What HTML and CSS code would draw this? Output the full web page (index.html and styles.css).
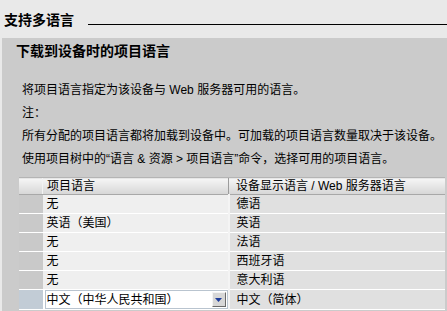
FILE: index.html
```html
<!DOCTYPE html>
<html lang="zh-CN">
<head>
    <meta charset="UTF-8">
    <title>支持多语言</title>
    <link rel="stylesheet" href="styles.css">
</head>
<body>

    <div class="section-title">
        <span>支持多语言</span>
        <div class="title-line"></div>
    </div>

    <div class="panel">
        <h2>下载到设备时的项目语言</h2>
        <p>将项目语言指定为该设备与 Web 服务器可用的语言。</p>
        <p>注：</p>
        <p>所有分配的项目语言都将加载到设备中。可加载的项目语言数量取决于该设备。</p>
        <p>使用项目树中的“语言 &amp; 资源 &gt; 项目语言”命令，选择可用的项目语言。</p>

        <table class="lang-table">
            <thead>
                <tr>
                    <th class="row-head"></th>
                    <th class="col-project">项目语言</th>
                    <th class="col-device">设备显示语言 / Web 服务器语言</th>
                </tr>
            </thead>
            <tbody>
                <tr>
                    <td class="row-head"></td>
                    <td class="col-project">无</td>
                    <td class="col-device">德语</td>
                </tr>
                <tr>
                    <td class="row-head"></td>
                    <td class="col-project">英语（美国）</td>
                    <td class="col-device">英语</td>
                </tr>
                <tr>
                    <td class="row-head"></td>
                    <td class="col-project">无</td>
                    <td class="col-device">法语</td>
                </tr>
                <tr>
                    <td class="row-head"></td>
                    <td class="col-project">无</td>
                    <td class="col-device">西班牙语</td>
                </tr>
                <tr>
                    <td class="row-head"></td>
                    <td class="col-project">无</td>
                    <td class="col-device">意大利语</td>
                </tr>
                <tr class="selected">
                    <td class="row-head"></td>
                    <td class="col-project">
                        <div class="combo">
                            <span class="combo-text">中文（中华人民共和国）</span>
                            <span class="combo-button">
                                <svg width="7" height="4" viewBox="0 0 7 4"><path d="M0 0h7L3.5 4z" fill="#1d3c9a"/></svg>
                            </span>
                        </div>
                    </td>
                    <td class="col-device">中文（简体）</td>
                </tr>
            </tbody>
        </table>
    </div>

</body>
</html>
```

FILE: styles.css
```css
/* 基本样式 */
body {
    margin: 0;
    background-color: #e9e9e9;
    color: #000;
    font-family: "Liberation Sans", "Noto Sans CJK SC", sans-serif;
    font-size: 12px;
}

.section-title {
    display: flex;
    align-items: flex-end;
    height: 29px;
    padding-left: 4px;
    margin-bottom: 9px;
    font-size: 14px;
    font-weight: bold;
    line-height: 18px;
}

.title-line {
    flex: 1;
    margin-left: 14px;
    border-bottom: 1px solid #000;
    margin-bottom: 4px;
}

.panel {
    margin-left: 2px;
    padding: 3px 2px 4px 17px;
    background-color: #cbcbcb;
}

.panel h2 {
    margin: 0 0 18px -3px;
    font-size: 14px;
    line-height: 20px;
}

.panel p {
    margin: 0 0 0 3px;
    line-height: 23px;
}

/* 表格 */
.lang-table {
    width: 426px;
    margin-top: 6px;
    border-collapse: collapse;
    table-layout: fixed;
}

.lang-table th,
.lang-table td {
    padding: 0;
    text-align: left;
    font-weight: normal;
    white-space: nowrap;
    overflow: hidden;
}

.lang-table th {
    height: 16px;
    line-height: 16px;
    background: linear-gradient(#f6f6f6, #e6e6e6 50%, #d6d6d6);
    border-top: 1px solid #b4b4b4;
    border-bottom: 1px solid #a8a8a8;
}

.lang-table td {
    height: 18px;
    line-height: 18px;
    border-bottom: 1px solid #fff;
}

.row-head {
    width: 23px;
}

.lang-table td.row-head {
    background-color: #c9c9c9;
}

.col-project {
    width: 181px;
    padding-left: 4px !important;
}

.lang-table td.col-project {
    background-color: #efefef;
}

.col-device {
    padding-left: 7px !important;
    border-left: 1px solid #9c9c9c;
}

.lang-table td.col-device {
    background-color: #e0e0e0;
    border-left: 2px solid #f4f4f4;
}

.lang-table th.col-project {
    border-left: 1px solid #f2f2f2;
}

.selected td.row-head {
    background-color: #c2ccd6;
}

.lang-table .selected td.col-project {
    padding: 0 !important;
    background-color: #fff;
}

.combo {
    display: flex;
    align-items: center;
    height: 17px;
    margin-left: 2px;
    border: 1px solid #b9c4cf;
    background-color: #fff;
}

.combo-text {
    flex: 1;
    padding-left: 1px;
}

.combo-button {
    display: flex;
    align-items: center;
    justify-content: center;
    width: 12px;
    height: 13px;
    margin-right: 1px;
    background-color: #d7d7d7;
    border: 1px solid;
    border-color: #f4f4f4 #6a6a6a #6a6a6a #f4f4f4;
}
```
